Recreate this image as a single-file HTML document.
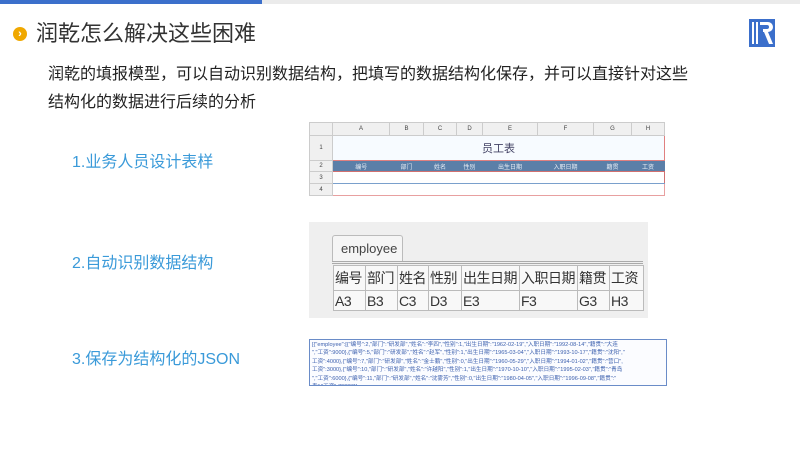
<!DOCTYPE html>
<html><head><meta charset="utf-8"><style>
*{margin:0;padding:0;box-sizing:border-box}
body{width:800px;height:450px;position:relative;background:#fff;font-family:"Liberation Sans","Noto Sans CJK SC",sans-serif;overflow:hidden}
.a{position:absolute}
.lbl{position:absolute;left:72px;font-size:16px;color:#3a9ad9}
table{border-collapse:collapse;position:absolute;table-layout:fixed}
td{padding:0;white-space:nowrap;overflow:hidden}
.e td{border:1px solid #bbb;text-align:left;padding-left:1px}
</style></head><body>
<div class="a" style="left:0;top:0;width:262px;height:4px;background:#3b6fcb"></div>
<div class="a" style="left:262px;top:0;width:538px;height:4px;background:#ebebeb"></div>
<div class="a" style="left:13px;top:27px;width:14px;height:14px;border-radius:50%;background:#f0a800;color:#fff;font-size:11px;font-weight:bold;line-height:14px;text-align:center">›</div>
<div class="a" style="left:36px;top:19px;font-size:22px;color:#333;line-height:30px">润乾怎么解决这些困难</div>
<svg class="a" style="left:749px;top:19px" width="26" height="28" viewBox="0 0 26 28"><rect width="26" height="28" fill="#3b6fcb"/><rect x="3" y="3" width="2" height="22" fill="#fff"/><rect x="7" y="3" width="2" height="22" fill="#fff"/><path d="M11 3h8a5 5 0 0 1 0 10l5 12h-4l-5-12h-1v-3h4a2 2 0 0 0 0-4h-7z" fill="#fff"/></svg>
<div class="a" style="left:48px;top:61px;width:700px;font-size:16px;line-height:28px;color:#222">润乾的填报模型，可以自动识别数据结构，把填写的数据结构化保存，并可以直接针对这些<br>结构化的数据进行后续的分析</div>
<div class="lbl" style="top:148px">1.业务人员设计表样</div>
<div class="lbl" style="top:249px">2.自动识别数据结构</div>
<div class="lbl" style="top:345px">3.保存为结构化的JSON</div>

<table style="left:309px;top:122px;width:355px;font-size:6px;color:#444;text-align:center">
<tr style="height:13px;background:#f0f0f0"><td style="width:23px;border:1px solid #ccc"></td><td style="width:57px;border:1px solid #ccc">A</td><td style="width:34px;border:1px solid #ccc">B</td><td style="width:33px;border:1px solid #ccc">C</td><td style="width:26px;border:1px solid #ccc">D</td><td style="width:55px;border:1px solid #ccc">E</td><td style="width:56px;border:1px solid #ccc">F</td><td style="width:38px;border:1px solid #ccc">G</td><td style="width:33px;border:1px solid #ccc">H</td></tr>
<tr style="height:25px"><td style="background:#f0f0f0;border:1px solid #ccc">1</td><td colspan="8" style="background:#f7fbff;border:1px solid #e08080;font-size:11px;color:#446">员工表</td></tr>
<tr style="height:11px;background:#5b7fa8;color:#e8eef5"><td style="background:#f0f0f0;color:#444;border:1px solid #ccc">2</td><td>编号</td><td>部门</td><td>姓名</td><td>性别</td><td>出生日期</td><td>入职日期</td><td>籍贯</td><td>工资</td></tr>
<tr style="height:12px"><td style="background:#f0f0f0;border:1px solid #ccc">3</td><td colspan="8" style="border:1px solid #d07070;border-bottom:1px solid #7aa0cc"></td></tr>
<tr style="height:12px"><td style="background:#f0f0f0;border:1px solid #ccc">4</td><td colspan="8" style="border:1px solid #e8a0a0;border-top:none"></td></tr>
</table>

<div class="a" style="left:309px;top:222px;width:339px;height:96px;background:#efefef"></div>
<div class="a" style="left:332px;top:235px;width:71px;height:27px;background:#f5f5f5;border:1px solid #bbb;border-bottom:none;border-radius:3px 3px 0 0;font-size:13px;color:#444;padding:5px 0 0 8px">employee</div>
<div class="a" style="left:332px;top:261px;width:311px;height:3px;border-top:1px solid #aaa;border-bottom:1px solid #aaa"></div>
<table class="e" style="left:333px;top:265px;width:310px;font-size:14px;color:#333;background:#f8f8f8;letter-spacing:-0.5px">
<tr style="height:25px"><td style="width:32px">编号</td><td style="width:32px">部门</td><td style="width:31px">姓名</td><td style="width:33px">性别</td><td style="width:58px">出生日期</td><td style="width:58px">入职日期</td><td style="width:32px">籍贯</td><td style="width:34px">工资</td></tr>
<tr style="height:20px;font-size:14px"><td>A3</td><td>B3</td><td>C3</td><td>D3</td><td>E3</td><td>F3</td><td>G3</td><td>H3</td></tr>
</table>

<div class="a" style="left:309px;top:339px;width:358px;height:47px;border:1px solid #6a8cc8;background:#fbfcff;font-size:5.6px;line-height:8.4px;color:#3b5fae;padding:1px 2px;overflow:hidden;white-space:nowrap">[{"employee":[{"编号":2,"部门":"研发部","姓名":"李四","性别":1,"出生日期":"1962-02-19","入职日期":"1992-08-14","籍贯":"大连<br>","工资":9000},{"编号":5,"部门":"研发部","姓名":"赵军","性别":1,"出生日期":"1965-03-04","入职日期":"1993-10-17","籍贯":"沈阳","<br>工资":4000},{"编号":7,"部门":"研发部","姓名":"金士鹏","性别":0,"出生日期":"1960-05-29","入职日期":"1994-01-02","籍贯":"营口",<br>工资":3000},{"编号":10,"部门":"研发部","姓名":"许越阳","性别":1,"出生日期":"1970-10-10","入职日期":"1995-02-03","籍贯":"青岛<br>","工资":6000},{"编号":11,"部门":"研发部","姓名":"沈雾芳","性别":0,"出生日期":"1980-04-05","入职日期":"1996-09-08","籍贯":"<br>青","工资":7000}]}]</div>
</body></html>
